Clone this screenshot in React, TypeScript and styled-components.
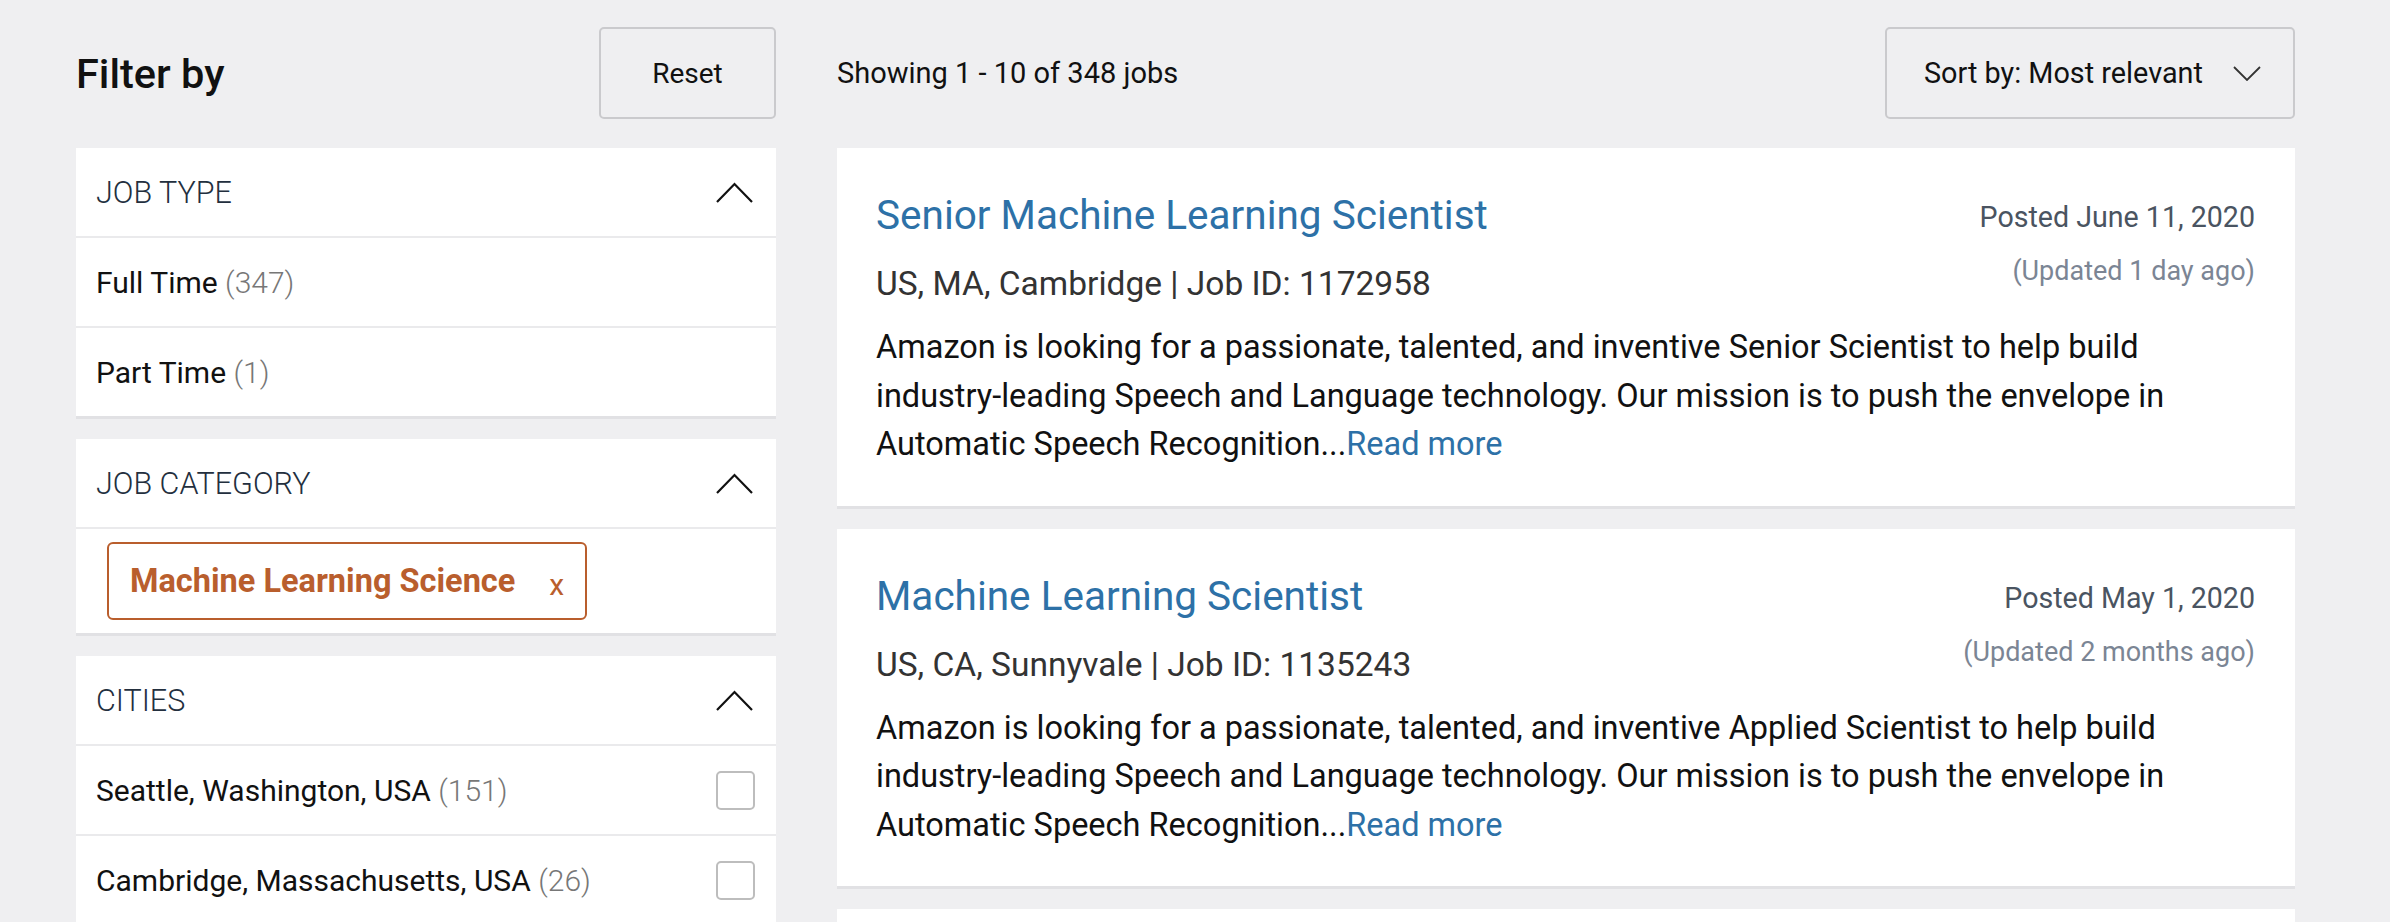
import React from 'react';
import styled, { createGlobalStyle } from 'styled-components';

const GlobalStyle = createGlobalStyle`
  html, body {
    margin: 0;
    padding: 0;
    background: #efeff1;
  }

  body {
    font-family: Roboto, 'Liberation Sans', sans-serif;
    color: #111111;
    -webkit-font-smoothing: antialiased;
  }
`;

const Page = styled.div`
  display: grid;
  grid-template-columns: 700px 1fr;
  column-gap: 61px;
  padding: 27px 95px 0 76px;
`;

const Column = styled.div`
  display: flex;
  flex-direction: column;
`;

const TopBar = styled.div`
  display: flex;
  align-items: center;
  justify-content: space-between;
  height: 92px;
  margin-bottom: 29px;
`;

const PageTitle = styled.h1`
  margin: 0;
  font-size: 41.5px;
  font-weight: 500;
  color: #111111;
`;

const ResultCount = styled.span`
  font-size: 29px;
  color: #111111;
`;

const OutlineButton = styled.button<{ $wide?: boolean }>`
  display: flex;
  align-items: center;
  justify-content: ${(p) => (p.$wide ? 'space-between' : 'center')};
  width: ${(p) => (p.$wide ? '410px' : '177px')};
  height: 92px;
  padding: ${(p) => (p.$wide ? '0 32px 0 37px' : '0')};
  background: transparent;
  border: 2px solid #cacacd;
  border-radius: 5px;
  font-family: inherit;
  font-size: ${(p) => (p.$wide ? '28.8px' : '28px')};
  color: #111111;
  cursor: pointer;
`;

const Panels = styled.div`
  display: flex;
  flex-direction: column;
  gap: 20px;
`;

const Panel = styled.section`
  background: #ffffff;
  border-bottom: 3px solid #e1e1e4;
`;

const PanelHeader = styled.div`
  display: flex;
  align-items: center;
  justify-content: space-between;
  height: 88px;
  padding: 0 23px 0 20px;
  border-bottom: 2px solid #eaeaec;
  font-size: 30.5px;
  font-weight: 300;
  color: #232f3e;
  text-transform: uppercase;
`;

const OptionRow = styled.label`
  display: flex;
  align-items: center;
  justify-content: space-between;
  height: 88px;
  padding: 0 21px 0 20px;
  font-size: 30px;
  color: #111111;

  & + & {
    border-top: 2px solid #eaeaec;
  }
`;

const Count = styled.span`
  color: #777777;
  font-weight: 300;
`;

const Box = styled.span`
  width: 39px;
  height: 39px;
  box-sizing: border-box;
  border: 2px solid #bdbdbd;
  border-radius: 5px;
  background: #ffffff;
`;

const ChipArea = styled.div`
  padding: 13px 31px;
`;

const Chip = styled.span`
  display: inline-flex;
  align-items: center;
  gap: 34px;
  height: 78px;
  box-sizing: border-box;
  padding: 0 21px 0 21px;
  border: 2px solid #b95e2d;
  border-radius: 6px;
  color: #b95e2d;
  font-size: 32.5px;
  font-weight: 700;

  .remove {
    font-weight: 400;
    font-size: 30px;
    margin-top: 6px;
  }
`;

const Cards = styled.div`
  display: flex;
  flex-direction: column;
  gap: 20px;
`;

const Card = styled.article`
  background: #ffffff;
  border-bottom: 3px solid #e1e1e4;
  padding: 43px 40px 37px 39px;
`;

const CardTop = styled.div`
  display: flex;
  justify-content: space-between;
  align-items: flex-start;
`;

const JobTitle = styled.a`
  display: block;
  font-size: 40.5px;
  line-height: 48px;
  color: #2d71a7;
  text-decoration: none;
`;

const Location = styled.div`
  margin-top: 21px;
  font-size: 33.5px;
  line-height: 48px;
  color: #333333;
`;

const Dates = styled.div`
  display: flex;
  flex-direction: column;
  align-items: flex-end;
  padding-top: 6px;
`;

const Posted = styled.span`
  font-size: 28.6px;
  line-height: 40px;
  color: #4a5461;
`;

const Updated = styled.span`
  margin-top: 14px;
  font-size: 27px;
  line-height: 40px;
  color: #7b8594;
`;

const Description = styled.p`
  margin: 15px 0 0;
  font-size: 32.5px;
  line-height: 48.5px;
  color: #111111;

  a {
    color: #2d71a7;
    text-decoration: none;
  }
`;

const Chevron = ({ down }: { down?: boolean }) =>
  down ? (
    <svg width="28" height="15" viewBox="0 0 28 15" fill="none">
      <polyline points="1,1 14,14 27,1" stroke="#333" strokeWidth="1.8" />
    </svg>
  ) : (
    <svg width="37" height="21" viewBox="0 0 37 21" fill="none">
      <polyline points="1,20 18.5,2 36,20" stroke="#111" strokeWidth="2.2" />
    </svg>
  );

type Job = {
  title: string;
  location: string;
  id: string;
  posted: string;
  updated: string;
  role: string;
};

const jobs: Job[] = [
  {
    title: 'Senior Machine Learning Scientist',
    location: 'US, MA, Cambridge',
    id: '1172958',
    posted: 'June 11, 2020',
    updated: '1 day ago',
    role: 'Senior Scientist',
  },
  {
    title: 'Machine Learning Scientist',
    location: 'US, CA, Sunnyvale',
    id: '1135243',
    posted: 'May 1, 2020',
    updated: '2 months ago',
    role: 'Applied Scientist',
  },
  {
    title: 'Applied Scientist',
    location: 'US, WA, Seattle',
    id: '1108442',
    posted: 'April 2, 2020',
    updated: '3 months ago',
    role: 'Applied Scientist',
  },
];

const FilterGroup = ({ title, children }: { title: string; children: React.ReactNode }) => (
  <Panel>
    <PanelHeader>
      {title}
      <Chevron />
    </PanelHeader>
    {children}
  </Panel>
);

const App = () => (
  <>
    <GlobalStyle />
    <Page>
      <Column>
        <TopBar>
          <PageTitle>Filter by</PageTitle>
          <OutlineButton>Reset</OutlineButton>
        </TopBar>
        <Panels>
          <FilterGroup title="Job type">
            <OptionRow>
              <span>
                Full Time <Count>(347)</Count>
              </span>
            </OptionRow>
            <OptionRow>
              <span>
                Part Time <Count>(1)</Count>
              </span>
            </OptionRow>
          </FilterGroup>
          <FilterGroup title="Job category">
            <ChipArea>
              <Chip>
                Machine Learning Science
                <span className="remove">x</span>
              </Chip>
            </ChipArea>
          </FilterGroup>
          <FilterGroup title="Cities">
            <OptionRow>
              <span>
                Seattle, Washington, USA <Count>(151)</Count>
              </span>
              <Box />
            </OptionRow>
            <OptionRow>
              <span>
                Cambridge, Massachusetts, USA <Count>(26)</Count>
              </span>
              <Box />
            </OptionRow>
          </FilterGroup>
        </Panels>
      </Column>
      <Column>
        <TopBar>
          <ResultCount>Showing 1 - 10 of 348 jobs</ResultCount>
          <OutlineButton $wide>
            Sort by: Most relevant
            <Chevron down />
          </OutlineButton>
        </TopBar>
        <Cards>
          {jobs.map((job) => (
            <Card key={job.id}>
              <CardTop>
                <div>
                  <JobTitle href="#">{job.title}</JobTitle>
                  <Location>
                    {job.location} | Job ID: {job.id}
                  </Location>
                </div>
                <Dates>
                  <Posted>Posted {job.posted}</Posted>
                  <Updated>(Updated {job.updated})</Updated>
                </Dates>
              </CardTop>
              <Description>
                Amazon is looking for a passionate, talented, and inventive {job.role} to help build
                industry-leading Speech and Language technology. Our mission is to push the envelope in
                Automatic Speech Recognition...<a href="#">Read more</a>
              </Description>
            </Card>
          ))}
        </Cards>
      </Column>
    </Page>
  </>
);

export default App;
